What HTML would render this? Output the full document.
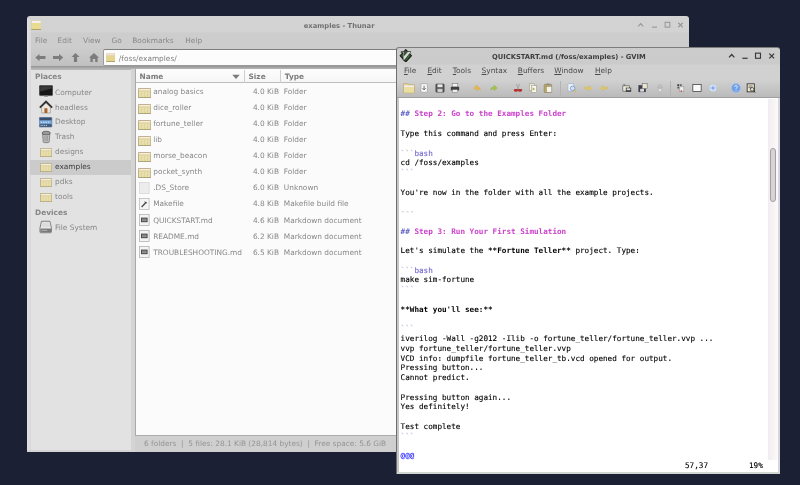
<!DOCTYPE html>
<html lang="en"><head><meta charset="utf-8"><title>Desktop - Thunar and GVIM</title>
<style>
html,body{margin:0;padding:0;}
body{width:800px;height:485px;overflow:hidden;background:#1b2035;position:relative;font-family:"DejaVu Sans","Liberation Sans",sans-serif;font-size:7.4px;color:#8a8a8a;}
*{box-sizing:border-box;}
#desk{position:absolute;left:0;top:0;width:800px;height:485px;overflow:hidden;will-change:transform;}
.abs{position:absolute;display:block;}
.t{position:absolute;white-space:nowrap;line-height:10px;height:10px;}
.b{font-weight:bold;}
.ttl{font-weight:bold;font-size:6.76px;}
u{text-decoration:underline;text-decoration-thickness:0.7px;text-underline-offset:0.6px;}
.vl{position:absolute;left:400.6px;white-space:pre;font-family:"DejaVu Sans Mono","Liberation Mono",monospace;font-size:7.65px;line-height:9.766px;height:9.766px;color:#000;-webkit-text-stroke:0.12px currentColor;}
.hd{color:#cb40cb;font-weight:bold;-webkit-text-stroke:0;}
.vl b{-webkit-text-stroke:0;}
.hm{color:#6266c2;}
.dl{color:#b4b8cc;}
.ty{color:#7468d0;}
.nt{color:#2a2aff;font-weight:bold;-webkit-text-stroke:0;}
.dh{color:#c2c2c6;}
</style></head>
<body><div id="desk">
<div class="abs " style="left:27px;top:16px;width:662px;height:436px;background:linear-gradient(#d3d3d3,#d2d2d2 16px,#cdcdcd 17px,#cdcdcd);border-radius:3px 3px 0 0;"></div>
<div class="abs " style="left:27px;top:47px;width:662px;height:22px;background:linear-gradient(#cdcdcd,#bebebe);"></div>
<div class="abs " style="left:30.6px;top:66.1px;width:662px;height:3.6px;background:linear-gradient(#8f8f8f,#a6a6a6 1.4px,#bcbcbc);"></div>
<svg class="abs" style="left:31px;top:19.7px" width="10.4" height="10.2" viewBox="0 0 10.4 10.2"><rect x="0.2" y="0.2" width="10" height="9.8" rx="0.8" fill="#d8c9a0"/><rect x="0.7" y="0.7" width="9" height="2.4" fill="#f6f0ee"/><rect x="0.5" y="2.9" width="9.4" height="6.4" fill="#e8dc92"/><rect x="0.3" y="9.1" width="9.8" height="0.9" fill="#a89c62"/></svg>
<div class="t ttl" style="left:303.8px;top:21px;color:#727272">examples - Thunar</div>
<svg class="abs" style="left:0;top:0" width="800" height="485"><path d="M638.18 26.35 L640.7 23.65 L643.22 26.35" fill="none" stroke="#9a9a9a" stroke-width="1.26"/><path d="M651.98 27.16 L657.02 27.16" stroke="#9a9a9a" stroke-width="1.17"/><rect x="665.16" y="22.30" width="4.68" height="4.86" fill="none" stroke="#9a9a9a" stroke-width="1.08"/><path d="M678.25 22.75 L682.75 27.25 M682.75 22.75 L678.25 27.25" stroke="#9a9a9a" stroke-width="1.26"/></svg>
<div class="t " style="left:35px;top:36px;color:#888888">File</div>
<div class="t " style="left:57.6px;top:36px;color:#888888">Edit</div>
<div class="t " style="left:83px;top:36px;color:#888888">View</div>
<div class="t " style="left:111.5px;top:36px;color:#888888">Go</div>
<div class="t " style="left:132.3px;top:36px;color:#888888">Bookmarks</div>
<div class="t " style="left:185.3px;top:36px;color:#888888">Help</div>
<svg class="abs" style="left:0;top:0" width="800" height="485"><path d="M35.3 57.6 L39.5 54.0 L39.5 56.1 L45.5 56.1 L45.5 59.1 L39.5 59.1 L39.5 61.2 Z" fill="#7c7c7c"/><path d="M63.2 57.6 L59 54.0 L59 56.1 L53 56.1 L53 59.1 L59 59.1 L59 61.2 Z" fill="#7c7c7c"/><path d="M75.5 53.1 L79.5 57.1 L77.1 57.1 L77.1 62.1 L73.9 62.1 L73.9 57.1 L71.5 57.1 Z" fill="#7c7c7c"/><path d="M94 53.1 L99 57.800000000000004 L97.6 57.800000000000004 L97.6 62.1 L95.2 62.1 L95.2 59.1 L92.8 59.1 L92.8 62.1 L90.4 62.1 L90.4 57.800000000000004 L89 57.800000000000004 Z" fill="#7c7c7c"/></svg>
<div class="abs " style="left:103.3px;top:49.3px;width:600px;height:16.8px;background:#fcfcfc;border:1px solid #9a9a9a;border-top-color:#7f7f7f;border-radius:2px;"></div>
<svg class="abs" style="left:105.8px;top:53.4px" width="9.4" height="9.1" viewBox="0 0 10.4 10.2"><rect x="0.2" y="0.2" width="10" height="9.8" rx="0.8" fill="#d6c69c"/><rect x="0.7" y="0.7" width="9" height="2.2" fill="#efe6dc"/><rect x="0.5" y="2.7" width="9.4" height="6.6" fill="#e4d690"/><rect x="0.3" y="9.1" width="9.8" height="0.9" fill="#a89c62"/></svg>
<div class="t " style="left:118.8px;top:54px;color:#7e7e7e">/foss/examples/</div>
<div class="abs " style="left:27px;top:19px;width:3.6px;height:433px;background:linear-gradient(90deg,#e2e2e2,#d8d8d8);"></div>
<div class="abs " style="left:27px;top:450px;width:108px;height:2px;background:#d6d3d6;"></div>
<div class="abs " style="left:30.6px;top:69.7px;width:100.4px;height:380.3px;background:#e2e2e2;"></div>
<div class="abs " style="left:131px;top:69px;width:4px;height:381px;background:#d4d4d4;"></div>
<div class="abs " style="left:135px;top:69px;width:560px;height:366px;background:#fbfbfb;border-left:1px solid #a9a9a9;"></div>
<div class="abs " style="left:136px;top:69.7px;width:560px;height:13.8px;background:linear-gradient(#fdfdfd,#f6f6f6);border-bottom:1px solid #bdbdbd;"></div>
<div class="abs " style="left:244.3px;top:70px;width:1px;height:13px;background:#cfcfcf;"></div>
<div class="abs " style="left:280.3px;top:70px;width:1px;height:13px;background:#cfcfcf;"></div>
<div class="t b" style="left:139.5px;top:72px;color:#7c7c7c">Name</div>
<div class="t b" style="left:248.5px;top:72px;color:#7c7c7c">Size</div>
<div class="t b" style="left:284.8px;top:72px;color:#7c7c7c">Type</div>
<svg class="abs" style="left:232px;top:74px" width="8" height="6"><path d="M0.3 0.8 L7.7 0.8 L4 5 Z" fill="#7a7a7a"/></svg>
<div class="abs " style="left:135px;top:435px;width:560px;height:16px;background:#cfcfcf;border-top:1px solid #ababab;"></div>
<div class="t " style="left:144px;top:439px;color:#949494">6 folders &nbsp;|&nbsp; 5 files: 28.1 KiB (28,814 bytes) &nbsp;|&nbsp; Free space: 5.6 GiB</div>
<div class="t b" style="left:35px;top:72px;color:#858585">Places</div>
<svg class="abs" style="left:39px;top:85.2px" width="14" height="13.6" viewBox="0 0 14 13.6"><rect x="0.4" y="0.4" width="13.2" height="10.2" rx="0.8" fill="#161616" stroke="#3a3a3a" stroke-width="0.5"/><path d="M1.2 1.2 L12.8 1.2 L12.8 3.6 L1.2 6.4 Z" fill="#3b3b3b"/><rect x="5" y="10.8" width="4" height="1.2" fill="#a0a0a0"/><rect x="3.2" y="11.9" width="7.6" height="1.3" rx="0.5" fill="#e8e8e8"/></svg>
<div class="t " style="left:55px;top:88px;color:#868686">Computer</div>
<svg class="abs" style="left:39px;top:100.45px" width="14" height="14" viewBox="0 0 14 14"><path d="M2.6 7 L2.6 13 L11.4 13 L11.4 7 L7 3 Z" fill="#ece6de" stroke="#8b8b84" stroke-width="0.6"/><path d="M0.8 7.6 L7 1.6 L13.2 7.6" fill="none" stroke="#333" stroke-width="1.8"/><rect x="5.4" y="8.2" width="3" height="4.8" fill="#a8622c"/></svg>
<div class="t " style="left:55px;top:103px;color:#868686">headless</div>
<svg class="abs" style="left:39.4px;top:117.20000000000002px" width="13.2" height="10.4" viewBox="0 0 13.2 10.4"><rect x="0.3" y="0.3" width="12.6" height="9.8" rx="0.6" fill="#6f9fd2" stroke="#4a6f9c" stroke-width="0.5"/><rect x="0.6" y="0.6" width="12" height="2.6" fill="#3a4f6a"/><rect x="0.6" y="7.2" width="12" height="2.6" fill="#3f5672"/><path d="M1.6 5.2 L11.6 5.2" stroke="#d8e8fa" stroke-width="1.2" stroke-dasharray="1.6 0.8"/><path d="M1.6 8.5 L8 8.5" stroke="#e8eef6" stroke-width="0.8" stroke-dasharray="1 0.8"/></svg>
<div class="t " style="left:55px;top:117px;color:#868686">Desktop</div>
<svg class="abs" style="left:40.8px;top:130.35px" width="10.4" height="13.2" viewBox="0 0 11 14"><path d="M1.6 3.4 L2.4 12.6 Q2.5 13.4 3.4 13.4 L7.6 13.4 Q8.5 13.4 8.6 12.6 L9.4 3.4 Z" fill="#c4c4c4" stroke="#6a6a6a" stroke-width="0.8"/><ellipse cx="5.5" cy="3.2" rx="4.4" ry="1.9" fill="#9a9a9a" stroke="#555" stroke-width="0.8"/><path d="M4 6 L4.3 12 M5.5 6 L5.5 12 M7 6 L6.7 12" stroke="#7d7d7d" stroke-width="0.6"/></svg>
<div class="t " style="left:55px;top:132px;color:#868686">Trash</div>
<svg class="abs" style="left:39.83px;top:148.01px" width="12.14" height="9.38" viewBox="0 0 13.2 10.2"><rect x="0.4" y="0.4" width="12.4" height="9.4" rx="0.6" fill="#e9dfae" stroke="#ab9d6c" stroke-width="0.8"/><rect x="1" y="1" width="11.2" height="1.7" fill="#f3eee0"/><path d="M0.8 2.9 H12.4" stroke="#cdbd8a" stroke-width="0.5"/><path d="M3.6 3.2 V9.2 M6.6 3.2 V9.2 M9.6 3.2 V9.2" stroke="#d9cc92" stroke-width="0.6"/><rect x="0.3" y="9.3" width="12.6" height="0.9" fill="#a39a72"/></svg>
<div class="t " style="left:55px;top:147px;color:#868686">designs</div>
<div class="abs " style="left:30px;top:159.6px;width:101px;height:15.2px;background:#cbcbcb;"></div>
<svg class="abs" style="left:39.83px;top:162.96px" width="12.14" height="9.38" viewBox="0 0 13.2 10.2"><rect x="0.4" y="0.4" width="12.4" height="9.4" rx="0.6" fill="#e9dfae" stroke="#ab9d6c" stroke-width="0.8"/><rect x="1" y="1" width="11.2" height="1.7" fill="#f3eee0"/><path d="M0.8 2.9 H12.4" stroke="#cdbd8a" stroke-width="0.5"/><path d="M3.6 3.2 V9.2 M6.6 3.2 V9.2 M9.6 3.2 V9.2" stroke="#d9cc92" stroke-width="0.6"/><rect x="0.3" y="9.3" width="12.6" height="0.9" fill="#a39a72"/></svg>
<div class="t " style="left:55px;top:162px;color:#3c3c3c">examples</div>
<svg class="abs" style="left:39.83px;top:177.91px" width="12.14" height="9.38" viewBox="0 0 13.2 10.2"><rect x="0.4" y="0.4" width="12.4" height="9.4" rx="0.6" fill="#e9dfae" stroke="#ab9d6c" stroke-width="0.8"/><rect x="1" y="1" width="11.2" height="1.7" fill="#f3eee0"/><path d="M0.8 2.9 H12.4" stroke="#cdbd8a" stroke-width="0.5"/><path d="M3.6 3.2 V9.2 M6.6 3.2 V9.2 M9.6 3.2 V9.2" stroke="#d9cc92" stroke-width="0.6"/><rect x="0.3" y="9.3" width="12.6" height="0.9" fill="#a39a72"/></svg>
<div class="t " style="left:55px;top:177px;color:#868686">pdks</div>
<svg class="abs" style="left:39.83px;top:192.86px" width="12.14" height="9.38" viewBox="0 0 13.2 10.2"><rect x="0.4" y="0.4" width="12.4" height="9.4" rx="0.6" fill="#e9dfae" stroke="#ab9d6c" stroke-width="0.8"/><rect x="1" y="1" width="11.2" height="1.7" fill="#f3eee0"/><path d="M0.8 2.9 H12.4" stroke="#cdbd8a" stroke-width="0.5"/><path d="M3.6 3.2 V9.2 M6.6 3.2 V9.2 M9.6 3.2 V9.2" stroke="#d9cc92" stroke-width="0.6"/><rect x="0.3" y="9.3" width="12.6" height="0.9" fill="#a39a72"/></svg>
<div class="t " style="left:55px;top:192px;color:#868686">tools</div>
<div class="t b" style="left:35px;top:208px;color:#858585">Devices</div>
<svg class="abs" style="left:39px;top:220px" width="13.4" height="14" viewBox="0 0 14 14"><path d="M2.6 1 L11.4 1 L13 8 L13 12 Q13 13 12 13 L2 13 Q1 13 1 12 L1 8 Z" fill="#ededed" stroke="#5e5e5e" stroke-width="0.8"/><path d="M3.4 2.4 L10.6 2.4 L11.6 7.2 L2.4 7.2 Z" fill="#dcdcdc"/><rect x="1.4" y="8.6" width="11.2" height="4" rx="0.6" fill="#7a7a7a"/><rect x="2.6" y="10" width="6" height="1" fill="#b5b5b5"/></svg>
<div class="t " style="left:55px;top:223px;color:#868686">File System</div>
<svg class="abs" style="left:137.6px;top:87.5px" width="13.2" height="10.2" viewBox="0 0 13.2 10.2"><rect x="0.4" y="0.4" width="12.4" height="9.4" rx="0.6" fill="#e9dfae" stroke="#ab9d6c" stroke-width="0.8"/><rect x="1" y="1" width="11.2" height="1.7" fill="#f3eee0"/><path d="M0.8 2.9 H12.4" stroke="#cdbd8a" stroke-width="0.5"/><path d="M3.6 3.2 V9.2 M6.6 3.2 V9.2 M9.6 3.2 V9.2" stroke="#d9cc92" stroke-width="0.6"/><rect x="0.3" y="9.3" width="12.6" height="0.9" fill="#a39a72"/></svg>
<div class="t " style="left:153.2px;top:87px;color:#878787">analog basics</div>
<div class="t " style="right:521px;top:87px;color:#878787">4.0 KiB</div>
<div class="t " style="left:283.8px;top:87px;color:#878787">Folder</div>
<svg class="abs" style="left:137.6px;top:103.54px" width="13.2" height="10.2" viewBox="0 0 13.2 10.2"><rect x="0.4" y="0.4" width="12.4" height="9.4" rx="0.6" fill="#e9dfae" stroke="#ab9d6c" stroke-width="0.8"/><rect x="1" y="1" width="11.2" height="1.7" fill="#f3eee0"/><path d="M0.8 2.9 H12.4" stroke="#cdbd8a" stroke-width="0.5"/><path d="M3.6 3.2 V9.2 M6.6 3.2 V9.2 M9.6 3.2 V9.2" stroke="#d9cc92" stroke-width="0.6"/><rect x="0.3" y="9.3" width="12.6" height="0.9" fill="#a39a72"/></svg>
<div class="t " style="left:153.2px;top:103px;color:#878787">dice_roller</div>
<div class="t " style="right:521px;top:103px;color:#878787">4.0 KiB</div>
<div class="t " style="left:283.8px;top:103px;color:#878787">Folder</div>
<svg class="abs" style="left:137.6px;top:119.58px" width="13.2" height="10.2" viewBox="0 0 13.2 10.2"><rect x="0.4" y="0.4" width="12.4" height="9.4" rx="0.6" fill="#e9dfae" stroke="#ab9d6c" stroke-width="0.8"/><rect x="1" y="1" width="11.2" height="1.7" fill="#f3eee0"/><path d="M0.8 2.9 H12.4" stroke="#cdbd8a" stroke-width="0.5"/><path d="M3.6 3.2 V9.2 M6.6 3.2 V9.2 M9.6 3.2 V9.2" stroke="#d9cc92" stroke-width="0.6"/><rect x="0.3" y="9.3" width="12.6" height="0.9" fill="#a39a72"/></svg>
<div class="t " style="left:153.2px;top:119px;color:#878787">fortune_teller</div>
<div class="t " style="right:521px;top:119px;color:#878787">4.0 KiB</div>
<div class="t " style="left:283.8px;top:119px;color:#878787">Folder</div>
<svg class="abs" style="left:137.6px;top:135.62px" width="13.2" height="10.2" viewBox="0 0 13.2 10.2"><rect x="0.4" y="0.4" width="12.4" height="9.4" rx="0.6" fill="#e9dfae" stroke="#ab9d6c" stroke-width="0.8"/><rect x="1" y="1" width="11.2" height="1.7" fill="#f3eee0"/><path d="M0.8 2.9 H12.4" stroke="#cdbd8a" stroke-width="0.5"/><path d="M3.6 3.2 V9.2 M6.6 3.2 V9.2 M9.6 3.2 V9.2" stroke="#d9cc92" stroke-width="0.6"/><rect x="0.3" y="9.3" width="12.6" height="0.9" fill="#a39a72"/></svg>
<div class="t " style="left:153.2px;top:135px;color:#878787">lib</div>
<div class="t " style="right:521px;top:135px;color:#878787">4.0 KiB</div>
<div class="t " style="left:283.8px;top:135px;color:#878787">Folder</div>
<svg class="abs" style="left:137.6px;top:151.66px" width="13.2" height="10.2" viewBox="0 0 13.2 10.2"><rect x="0.4" y="0.4" width="12.4" height="9.4" rx="0.6" fill="#e9dfae" stroke="#ab9d6c" stroke-width="0.8"/><rect x="1" y="1" width="11.2" height="1.7" fill="#f3eee0"/><path d="M0.8 2.9 H12.4" stroke="#cdbd8a" stroke-width="0.5"/><path d="M3.6 3.2 V9.2 M6.6 3.2 V9.2 M9.6 3.2 V9.2" stroke="#d9cc92" stroke-width="0.6"/><rect x="0.3" y="9.3" width="12.6" height="0.9" fill="#a39a72"/></svg>
<div class="t " style="left:153.2px;top:151px;color:#878787">morse_beacon</div>
<div class="t " style="right:521px;top:151px;color:#878787">4.0 KiB</div>
<div class="t " style="left:283.8px;top:151px;color:#878787">Folder</div>
<svg class="abs" style="left:137.6px;top:167.7px" width="13.2" height="10.2" viewBox="0 0 13.2 10.2"><rect x="0.4" y="0.4" width="12.4" height="9.4" rx="0.6" fill="#e9dfae" stroke="#ab9d6c" stroke-width="0.8"/><rect x="1" y="1" width="11.2" height="1.7" fill="#f3eee0"/><path d="M0.8 2.9 H12.4" stroke="#cdbd8a" stroke-width="0.5"/><path d="M3.6 3.2 V9.2 M6.6 3.2 V9.2 M9.6 3.2 V9.2" stroke="#d9cc92" stroke-width="0.6"/><rect x="0.3" y="9.3" width="12.6" height="0.9" fill="#a39a72"/></svg>
<div class="t " style="left:153.2px;top:167px;color:#878787">pocket_synth</div>
<div class="t " style="right:521px;top:167px;color:#878787">4.0 KiB</div>
<div class="t " style="left:283.8px;top:167px;color:#878787">Folder</div>
<svg class="abs" style="left:139px;top:182.23999999999998px" width="11" height="12" viewBox="0 0 11 12"><rect x="0.5" y="0.5" width="9.6" height="11" fill="#ececec" stroke="#d3d3d3" stroke-width="0.7"/></svg>
<div class="t " style="left:153.2px;top:183px;color:#878787">.DS_Store</div>
<div class="t " style="right:521px;top:183px;color:#878787">6.0 KiB</div>
<div class="t " style="left:283.8px;top:183px;color:#878787">Unknown</div>
<svg class="abs" style="left:139px;top:198.28px" width="11" height="12" viewBox="0 0 11 12"><rect x="0.5" y="0.5" width="9.6" height="11" fill="#f4f4f4" stroke="#b5b5b5" stroke-width="0.7"/><path d="M2.6 9 L6.2 5.2" stroke="#4a4a4a" stroke-width="1.3"/><path d="M5.2 3.2 L8.2 4.6 L6.6 6.2 Z" fill="#4a4a4a"/></svg>
<div class="t " style="left:153.2px;top:199px;color:#878787">Makefile</div>
<div class="t " style="right:521px;top:199px;color:#878787">4.8 KiB</div>
<div class="t " style="left:283.8px;top:199px;color:#878787">Makefile build file</div>
<svg class="abs" style="left:139px;top:214.32px" width="11" height="12" viewBox="0 0 11 12"><rect x="0.5" y="0.5" width="9.6" height="11" fill="#f4f4f4" stroke="#a9a9a9" stroke-width="0.7"/><rect x="2" y="3.6" width="6.6" height="4.6" fill="#4c4c4c"/><path d="M3 5.2 L7.6 5.2 M3 6.7 L7.6 6.7" stroke="#dcdcdc" stroke-width="0.6"/></svg>
<div class="t " style="left:153.2px;top:216px;color:#878787">QUICKSTART.md</div>
<div class="t " style="right:521px;top:216px;color:#878787">4.6 KiB</div>
<div class="t " style="left:283.8px;top:216px;color:#878787">Markdown document</div>
<svg class="abs" style="left:139px;top:230.35999999999999px" width="11" height="12" viewBox="0 0 11 12"><rect x="0.5" y="0.5" width="9.6" height="11" fill="#f4f4f4" stroke="#a9a9a9" stroke-width="0.7"/><rect x="2" y="3.6" width="6.6" height="4.6" fill="#4c4c4c"/><path d="M3 5.2 L7.6 5.2 M3 6.7 L7.6 6.7" stroke="#dcdcdc" stroke-width="0.6"/></svg>
<div class="t " style="left:153.2px;top:232px;color:#878787">README.md</div>
<div class="t " style="right:521px;top:232px;color:#878787">6.2 KiB</div>
<div class="t " style="left:283.8px;top:232px;color:#878787">Markdown document</div>
<svg class="abs" style="left:139px;top:246.39999999999998px" width="11" height="12" viewBox="0 0 11 12"><rect x="0.5" y="0.5" width="9.6" height="11" fill="#f4f4f4" stroke="#a9a9a9" stroke-width="0.7"/><rect x="2" y="3.6" width="6.6" height="4.6" fill="#4c4c4c"/><path d="M3 5.2 L7.6 5.2 M3 6.7 L7.6 6.7" stroke="#dcdcdc" stroke-width="0.6"/></svg>
<div class="t " style="left:153.2px;top:248px;color:#878787">TROUBLESHOOTING.md</div>
<div class="t " style="right:521px;top:248px;color:#878787">6.5 KiB</div>
<div class="t " style="left:283.8px;top:248px;color:#878787">Markdown document</div>
<div class="abs " style="left:396.3px;top:47px;width:384px;height:426.6px;background:linear-gradient(#cccccc,#cbcbcb 16px,#d1d1d1 17px,#d1d1d1);border-radius:3px 3px 0 0;border-top:1px solid #7d7d7d;border-left:1px solid #6e6e6e;"></div>
<div class="abs " style="left:397px;top:79px;width:383px;height:19px;background:linear-gradient(#d2d2d2,#b9b9b9);"></div>
<div class="abs " style="left:397px;top:97px;width:383px;height:1px;background:#9f9f9f;"></div>
<div class="abs " style="left:397px;top:98px;width:381.3px;height:374px;background:#ffffff;"></div>
<div class="abs " style="left:397px;top:98px;width:2.2px;height:375.6px;background:#c6c6c6;"></div>
<div class="abs " style="left:768.3px;top:98.6px;width:9.7px;height:361.4px;background:linear-gradient(90deg,#f1ecf0,#fbfafa);"></div>
<div class="abs " style="left:778px;top:98px;width:2.2px;height:375.5px;background:#d6d6dc;"></div>
<div class="abs " style="left:397.3px;top:472px;width:383px;height:1.8px;background:#d2d6d2;"></div>
<div class="abs " style="left:769.6px;top:147.8px;width:6px;height:54.6px;background:#d6d4d6;border:0.7px solid #a29ea2;border-radius:3px;"></div>
<svg class="abs" style="left:399.2px;top:48.6px" width="13.6" height="13.6" viewBox="0 0 12 13"><path d="M6 0.6 L11.4 6.4 L6 12.4 L0.6 6.4 Z" fill="#2f6a2c" stroke="#1a1a1a" stroke-width="1"/><path d="M1.6 2.4 L5.2 2.4 L5.2 3.4 L4.6 3.4 L4.6 6.2 L7.8 2.4 L10.6 2.4 L10.6 3.4 L4.8 10.6 L3.4 10.6 L3.4 3.4 L1.6 3.4 Z" fill="#d8d8d8" stroke="#1d1d1d" stroke-width="0.6"/></svg>
<div class="t ttl" style="left:492px;top:52px;color:#3e3e3e">QUICKSTART.md (/foss/examples) - GVIM</div>
<svg class="abs" style="left:0;top:0" width="800" height="485"><path d="M729.04 57.42 L731.7 54.58 L734.36 57.42" fill="none" stroke="#3a3a3a" stroke-width="1.33"/><path d="M742.34 58.28 L747.66 58.28" stroke="#3a3a3a" stroke-width="1.23"/><rect x="755.53" y="53.15" width="4.94" height="5.13" fill="none" stroke="#3a3a3a" stroke-width="1.14"/><path d="M769.33 53.62 L774.08 58.38 M774.08 53.62 L769.33 58.38" stroke="#3a3a3a" stroke-width="1.33"/></svg>
<div class="t " style="left:404px;top:66px;color:#4a4a4a"><u>F</u>ile</div>
<div class="t " style="left:427.4px;top:66px;color:#4a4a4a"><u>E</u>dit</div>
<div class="t " style="left:452.8px;top:66px;color:#4a4a4a"><u>T</u>ools</div>
<div class="t " style="left:481.6px;top:66px;color:#4a4a4a"><u>S</u>yntax</div>
<div class="t " style="left:517.8px;top:66px;color:#4a4a4a"><u>B</u>uffers</div>
<div class="t " style="left:554.3px;top:66px;color:#4a4a4a"><u>W</u>indow</div>
<div class="t " style="left:595px;top:66px;color:#4a4a4a"><u>H</u>elp</div>
<svg class="abs" style="left:403.0px;top:82.0px" width="12" height="12" viewBox="0 0 12 12"><path d="M0.6 1.6 L4.6 1.6 L5.6 2.8 L11.4 2.8 L11.4 10.8 L0.6 10.8 Z" fill="#e3d294" stroke="#b9a566" stroke-width="0.6"/><rect x="1" y="3.4" width="10" height="2" fill="#f3ecec"/><rect x="1" y="5" width="10" height="5.6" fill="#eadf9f"/></svg>
<svg class="abs" style="left:419.2px;top:82.7px" width="10" height="10" viewBox="0 0 12 12"><rect x="2.4" y="1" width="7.4" height="10" fill="#f7f7f7" stroke="#9c9c9c" stroke-width="0.7"/><path d="M6.1 3.2 L6.1 8 M4.2 6.2 L6.1 8.2 L8 6.2" stroke="#555" stroke-width="1" fill="none"/></svg>
<svg class="abs" style="left:435.3px;top:82.7px" width="10" height="10" viewBox="0 0 12 12"><rect x="1" y="1.2" width="10" height="9.8" rx="1" fill="#5a5a5a" stroke="#2f2f2f" stroke-width="0.6"/><rect x="3" y="1.6" width="6" height="3.4" fill="#e8e8e8"/><rect x="3" y="7" width="6" height="4" fill="#cfcfcf"/></svg>
<svg class="abs" style="left:450.0px;top:82.7px" width="10" height="10" viewBox="0 0 12 12"><rect x="2.6" y="0.8" width="6.8" height="4" fill="#f2f2f2" stroke="#6a6a6a" stroke-width="0.6"/><rect x="1" y="4.6" width="10" height="4.4" rx="0.8" fill="#3e3e3e"/><rect x="3" y="8" width="6" height="3.2" fill="#efefef" stroke="#6a6a6a" stroke-width="0.5"/></svg>
<svg class="abs" style="left:472.2px;top:82.7px" width="10" height="10" viewBox="0 0 12 12"><path d="M2 6 L6 2.6 L6 4.6 Q10 4.6 10 8.6 Q8.6 7 6 7.2 L6 9.2 Z" fill="#e8b84e" stroke="#cf9a2e" stroke-width="0.4"/></svg>
<svg class="abs" style="left:489.0px;top:82.7px" width="10" height="10" viewBox="0 0 12 12"><path d="M10 6 L6 2.6 L6 4.6 Q2 4.6 2 8.6 Q3.4 7 6 7.2 L6 9.2 Z" fill="#a5c251" stroke="#8aa63a" stroke-width="0.4"/></svg>
<svg class="abs" style="left:512.6px;top:82.7px" width="10" height="10" viewBox="0 0 12 12"><path d="M4 1 L6.6 7 M8 1 L5.4 7" stroke="#9a9a9a" stroke-width="0.9"/><ellipse cx="3.6" cy="9" rx="2.4" ry="1.7" fill="#c23a3a"/><ellipse cx="8.4" cy="9" rx="2.4" ry="1.7" fill="#c23a3a"/><rect x="1" y="7.6" width="10" height="1.4" fill="#a82e2e"/></svg>
<svg class="abs" style="left:528.0px;top:82.7px" width="10" height="10" viewBox="0 0 12 12"><rect x="1.6" y="1" width="6.4" height="8.4" fill="#f3f3ea" stroke="#8a8a6a" stroke-width="0.6"/><rect x="4" y="3" width="6.4" height="8.4" fill="#f7f7ee" stroke="#8a8a6a" stroke-width="0.6"/><path d="M5.4 5 L8.8 7.2 L5.4 9.4 Z" fill="#b8b070"/></svg>
<svg class="abs" style="left:543.2px;top:82.7px" width="10" height="10" viewBox="0 0 12 12"><rect x="1.4" y="1.6" width="9" height="9.8" rx="0.8" fill="#b9a86a" stroke="#857744" stroke-width="0.6"/><rect x="4" y="0.6" width="3.8" height="2" fill="#8c8c8c"/><rect x="4.4" y="4.4" width="6" height="6.6" fill="#f5f5ee" stroke="#8d8d70" stroke-width="0.5"/></svg>
<svg class="abs" style="left:567.2px;top:82.7px" width="10" height="10" viewBox="0 0 12 12"><rect x="1.2" y="1" width="7" height="8.6" fill="#eef3fa" stroke="#8ea8cf" stroke-width="0.6"/><circle cx="6.8" cy="6.4" r="2.8" fill="#cfe0f6" stroke="#6f8fc0" stroke-width="0.9"/><path d="M8.8 8.6 L11 11" stroke="#d9b64a" stroke-width="1.4"/></svg>
<svg class="abs" style="left:582.6px;top:82.7px" width="10" height="10" viewBox="0 0 12 12"><path d="M2 5.2 L7 5.2 L7 3.2 L10.4 6.2 L7 9.2 L7 7.2 L2 7.2 Z" fill="#e7cb62" stroke="#c9a93a" stroke-width="0.4"/></svg>
<svg class="abs" style="left:598.5px;top:82.7px" width="10" height="10" viewBox="0 0 12 12"><path d="M10 5.2 L5 5.2 L5 3.2 L1.6 6.2 L5 9.2 L5 7.2 L10 7.2 Z" fill="#e7cb62" stroke="#c9a93a" stroke-width="0.4"/></svg>
<svg class="abs" style="left:621.7px;top:82.7px" width="10" height="10" viewBox="0 0 12 12"><rect x="1" y="3.4" width="8" height="6.4" fill="#ebe6d2" stroke="#4a4a4a" stroke-width="0.7"/><rect x="4.6" y="5.6" width="6.4" height="5" fill="#3c3c3c"/><rect x="5.6" y="6.4" width="4.4" height="2.2" fill="#e4e4e4"/><path d="M2.6 1 L2.6 3 M1.4 2 L2.6 3.2 L3.8 2" stroke="#555" stroke-width="0.7" fill="none"/></svg>
<svg class="abs" style="left:637.7px;top:82.7px" width="10" height="10" viewBox="0 0 12 12"><rect x="1" y="3" width="8" height="7.6" fill="#3c3c52" stroke="#2c2c2c" stroke-width="0.6"/><rect x="5" y="0.8" width="6" height="6" fill="#e9e4d0" stroke="#5c5c5c" stroke-width="0.6"/><rect x="2.6" y="7" width="4.6" height="3.4" fill="#d9d9d9"/></svg>
<svg class="abs" style="left:655.0px;top:82.7px" width="10" height="10" viewBox="0 0 12 12"><path d="M3 5.2 L9 5.2 M3.6 5.2 Q3.6 2 6 2 Q8.4 2 8.4 5.2" fill="none" stroke="#ababab" stroke-width="0.8"/><circle cx="6" cy="8.6" r="2.2" fill="#e3e3e3" stroke="#a6a6a6" stroke-width="0.7"/></svg>
<svg class="abs" style="left:676.2px;top:82.7px" width="10" height="10" viewBox="0 0 12 12"><rect x="1.6" y="1.4" width="2.2" height="2.2" fill="#444"/><rect x="4.6" y="1.4" width="2.2" height="2.2" fill="#666"/><rect x="1.6" y="4.4" width="2.2" height="2.2" fill="#555"/><rect x="4.6" y="4.6" width="4.8" height="6" fill="#efefef" stroke="#777" stroke-width="0.5"/><circle cx="6.4" cy="9.6" r="1" fill="#c33"/></svg>
<svg class="abs" style="left:691.8px;top:82.7px" width="10" height="10" viewBox="0 0 12 12"><rect x="1" y="1.8" width="10" height="8.4" fill="#fafafa" stroke="#3c3c3c" stroke-width="0.9"/></svg>
<svg class="abs" style="left:707.6px;top:82.7px" width="10" height="10" viewBox="0 0 12 12"><circle cx="6" cy="6" r="4.2" fill="#d9e6f8" stroke="#b5cbea" stroke-width="0.6"/><path d="M3.2 6 L8.8 6 M6 3.4 L6 8.6" stroke="#6e9be0" stroke-width="1.2"/></svg>
<svg class="abs" style="left:730.6px;top:82.7px" width="10" height="10" viewBox="0 0 12 12"><circle cx="6" cy="6" r="5.4" fill="#6f9fe6" stroke="#a8c2ee" stroke-width="0.9"/><path d="M4.4 4.6 Q4.4 3 6 3 Q7.6 3 7.6 4.6 Q7.6 5.6 6 6.4 L6 7.4" stroke="#dfeafb" stroke-width="1.1" fill="none"/><circle cx="6" cy="9" r="0.7" fill="#dfeafb"/></svg>
<svg class="abs" style="left:745.6px;top:82.7px" width="10" height="10" viewBox="0 0 12 12"><rect x="1.4" y="1" width="8.6" height="9.6" fill="#f1ead2" stroke="#2a2a2a" stroke-width="1"/><path d="M3 3.6 L8 3.6 M3 5.6 L7 5.6" stroke="#3c3c3c" stroke-width="0.8"/><circle cx="7.4" cy="7.6" r="2.2" fill="#e9e4d0" stroke="#2a2a2a" stroke-width="0.9"/><path d="M9 9.2 L11 11.2" stroke="#2a2a2a" stroke-width="1.2"/></svg>
<div class="abs " style="left:560px;top:81px;width:1px;height:15px;background:#b3b3b3;"></div>
<div class="abs " style="left:669.5px;top:81px;width:1px;height:15px;background:#b3b3b3;"></div>
<div class="vl" style="top:108.62px"><span class="hd"><span class="hm">##</span> Step 2: Go to the Examples Folder</span></div>
<div class="vl" style="top:128.62px">Type this command and press Enter:</div>
<div class="vl" style="top:148.62px"><span class="dl">```</span><span class="ty">bash</span></div>
<div class="vl" style="top:157.62px">cd /foss/examples</div>
<div class="vl" style="top:167.62px"><span class="dl">```</span></div>
<div class="vl" style="top:187.62px">You're now in the folder with all the example projects.</div>
<div class="vl" style="top:206.62px"><span class="dh">---</span></div>
<div class="vl" style="top:226.62px"><span class="hd"><span class="hm">##</span> Step 3: Run Your First Simulation</span></div>
<div class="vl" style="top:245.62px">Let's simulate the <b>**Fortune Teller**</b> project. Type:</div>
<div class="vl" style="top:265.62px"><span class="dl">```</span><span class="ty">bash</span></div>
<div class="vl" style="top:274.62px">make sim-fortune</div>
<div class="vl" style="top:284.62px"><span class="dl">```</span></div>
<div class="vl" style="top:304.62px"><b>**What you'll see:**</b></div>
<div class="vl" style="top:323.62px"><span class="dl">```</span></div>
<div class="vl" style="top:333.62px">iverilog -Wall -g2012 -Ilib -o fortune_teller/fortune_teller.vvp ...</div>
<div class="vl" style="top:343.62px">vvp fortune_teller/fortune_teller.vvp</div>
<div class="vl" style="top:353.62px">VCD info: dumpfile fortune_teller_tb.vcd opened for output.</div>
<div class="vl" style="top:362.62px">Pressing button...</div>
<div class="vl" style="top:372.62px">Cannot predict.</div>
<div class="vl" style="top:392.62px">Pressing button again...</div>
<div class="vl" style="top:401.62px">Yes definitely!</div>
<div class="vl" style="top:421.62px">Test complete</div>
<div class="vl" style="top:431.62px"><span class="dl">```</span></div>
<div class="vl" style="top:450.62px"><span class="nt">@@@</span></div>
<div class="vl" style="top:460.62px;left:685px">57,37</div>
<div class="vl" style="top:460.62px;left:749px">19%</div>
</div></body></html>
